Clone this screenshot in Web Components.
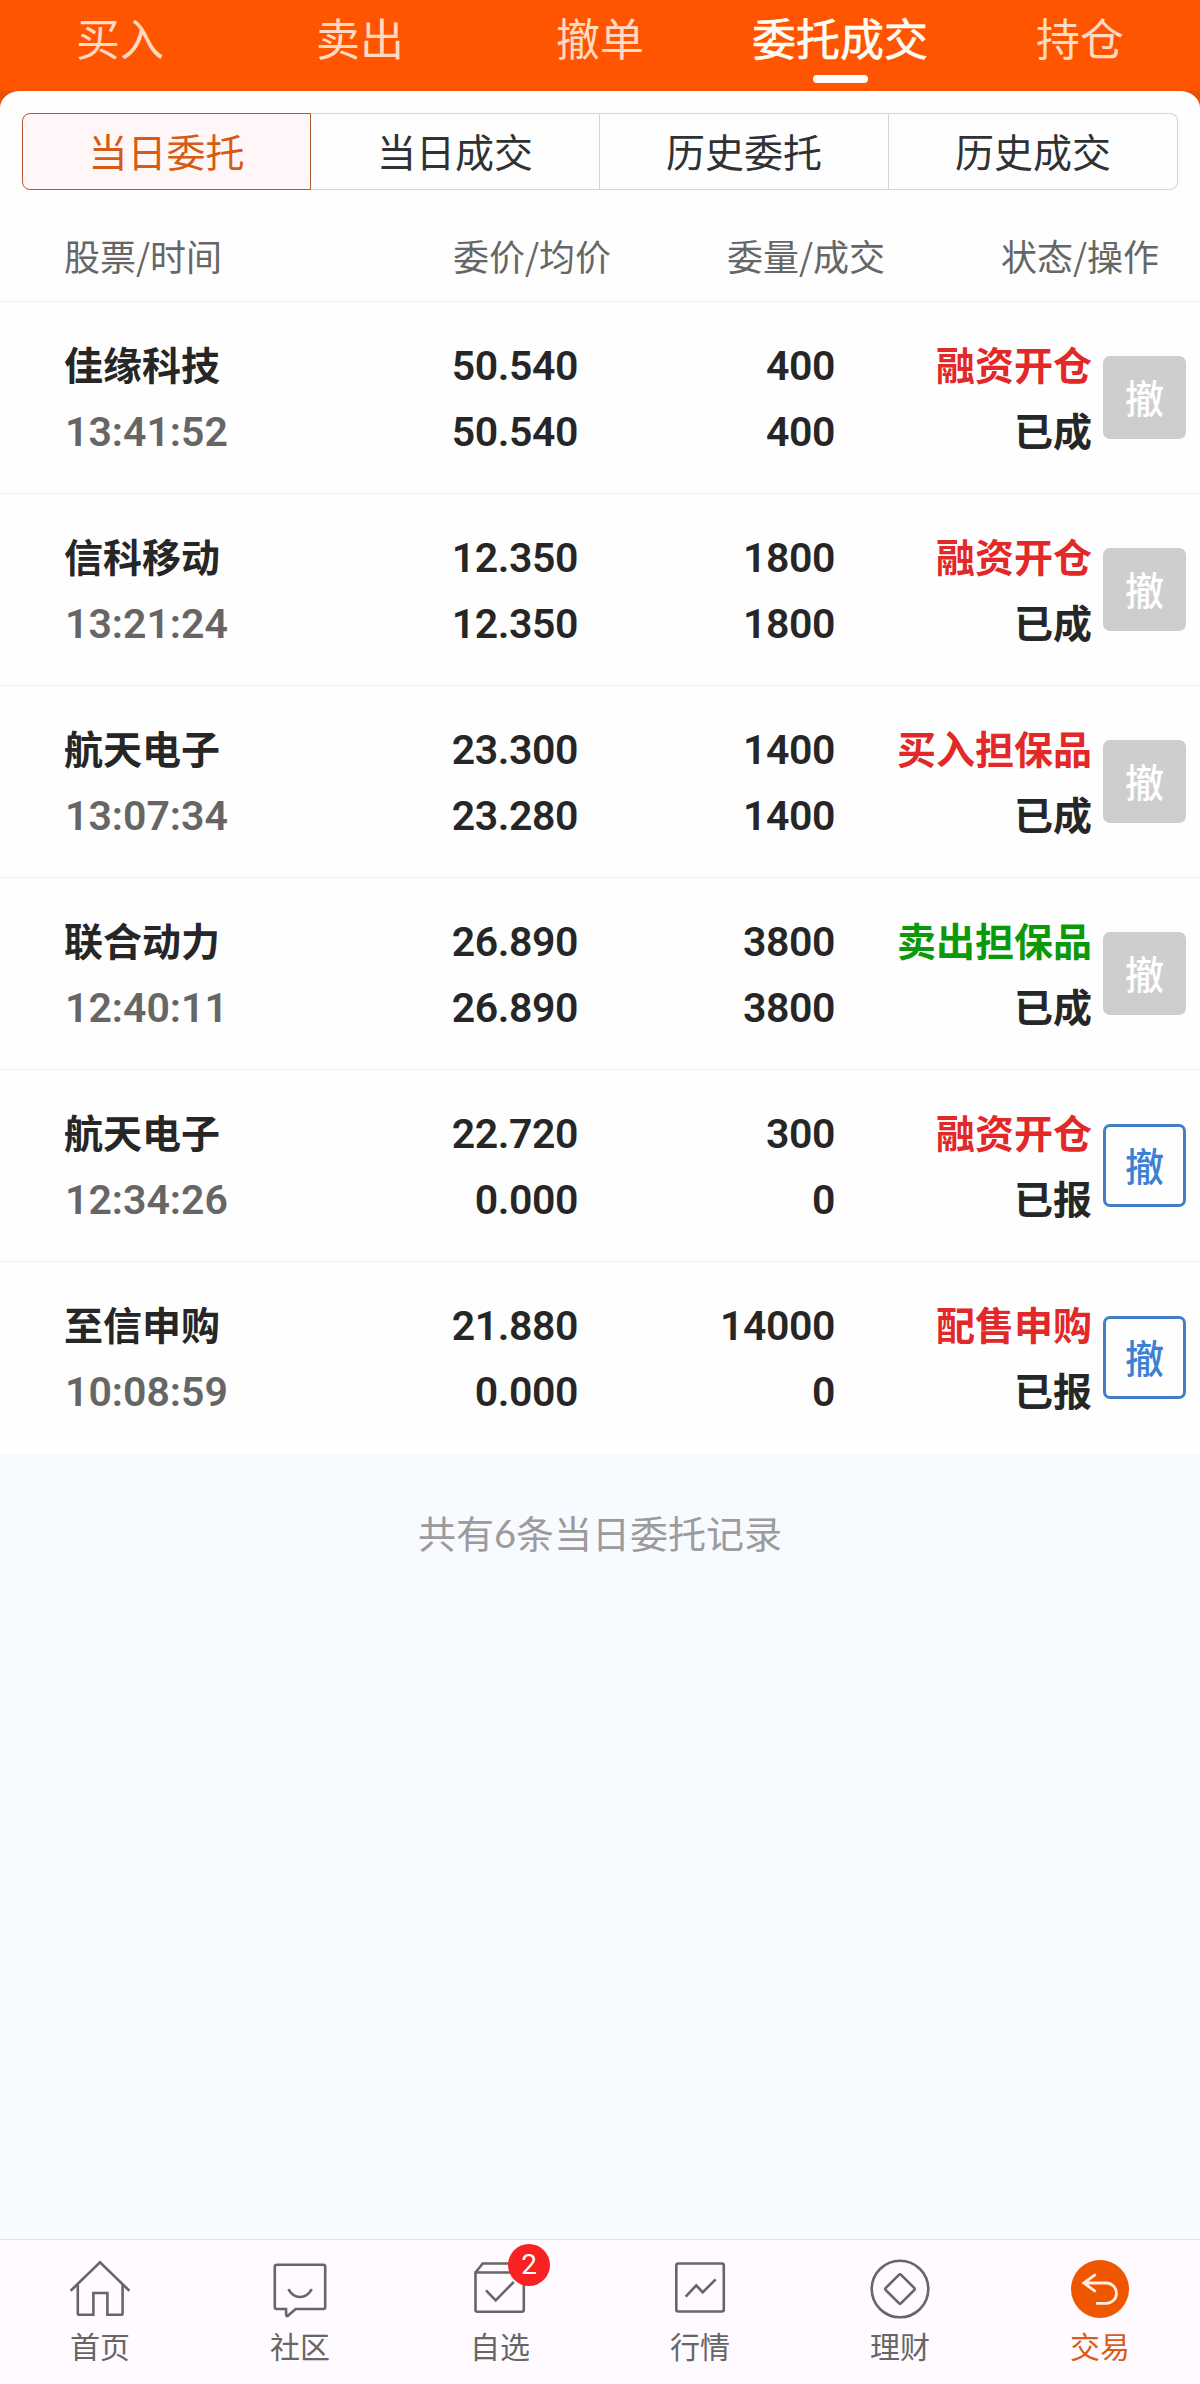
<!DOCTYPE html>
<html lang="zh-CN">
<head>
<meta charset="UTF-8">
<title>委托成交</title>
<style>
    html, body {
        margin: 0;
        height: 100%;
    }

    body {
        font-family: "Noto Sans CJK SC", sans-serif;
        color: #262626;
        background: #f7faff;
    }
</style>
</head>
<body>
<trade-page></trade-page>

<script>
    /**
     * Base class: renders the markup of the subclass into an open shadow root
     */
    class BaseElement extends HTMLElement {
        connectedCallback() {
            if (this.shadowRoot) return;
            this.attachShadow({ mode: 'open' });
            this.shadowRoot.innerHTML = this.render();
        }
    }

    /**
     * Orange bar at the top
     * <top-tab active>label</top-tab>
     */
    class TopTab extends BaseElement {
        render() {
            return `
                <style>
                    :host {
                        display: flex;
                        flex-direction: column;
                        align-items: center;
                        flex: 1 0 0;
                        height: 91px;
                        color: #ffdac2;
                        font-size: 44px;
                        line-height: 60px;
                        white-space: nowrap;
                    }
                    :host([active]) {
                        color: #fffdf8;
                        -webkit-text-stroke: 0.6px #fffdf8;
                    }
                    .label { padding-top: 7px; }
                    .bar {
                        width: 55px;
                        height: 8px;
                        margin-top: 8px;
                        border-radius: 4px;
                    }
                    :host([active]) .bar { background: #fffdfa; }
                </style>
                <div class="label"><slot></slot></div>
                <div class="bar"></div>
            `;
        }
    }

    /**
     * One button of the segmented control
     */
    class SegmentItem extends BaseElement {
        render() {
            return `
                <style>
                    :host {
                        display: block;
                        box-sizing: border-box;
                        width: 25%;
                        height: 77px;
                        border: 1px solid #d2d4d8;
                        border-left-width: 0;
                        font-size: 39px;
                        line-height: 72px;
                        text-align: center;
                        color: #303133;
                    }
                    :host(:last-child) { border-radius: 0 8px 8px 0; }
                    :host([active]) {
                        border: 1px solid #b35c30;
                        border-radius: 8px 0 0 8px;
                        background: #fff7f7;
                        color: #d65c14;
                    }
                </style>
                <slot></slot>
            `;
        }
    }

    /**
     * Column titles of the order list
     */
    class ListHead extends BaseElement {
        render() {
            return `
                <style>
                    :host {
                        display: grid;
                        grid-template-columns: 222px 389px 274px 274px;
                        height: 88px;
                        border-top: 1px solid #fafafa;
                        border-bottom: 1px solid #efefef;
                        font-size: 36px;
                        line-height: 85px;
                        text-align: right;
                        white-space: nowrap;
                        color: #666;
                    }
                </style>
                <span>股票/时间</span>
                <span>委价/均价</span>
                <span>委量/成交</span>
                <span>状态/操作</span>
            `;
        }
    }

    /**
     * Cancel button, grey when the order can't be cancelled any more
     */
    class CancelButton extends BaseElement {
        render() {
            return `
                <style>
                    :host {
                        box-sizing: border-box;
                        display: flex;
                        align-items: center;
                        justify-content: center;
                        width: 83px;
                        height: 83px;
                        padding-bottom: 4px;
                        border: 3px solid #427fc8;
                        border-radius: 7px;
                        color: #3c80d4;
                        font-size: 39px;
                        line-height: 60px;
                        font-weight: 500;
                    }
                    :host([disabled]) {
                        border-color: #cecece;
                        background: #cecece;
                        color: #fff;
                    }
                </style>
                <span><slot></slot></span>
            `;
        }
    }

    /**
     * One order
     * <order-row name time price avg amount filled type state side></order-row>
     */
    class OrderRow extends BaseElement {
        render() {
            const get = (name) => this.getAttribute(name);
            const disabled = get('state') === '已成' ? 'disabled' : '';
            return `
                <style>
                    :host {
                        box-sizing: border-box;
                        display: grid;
                        grid-template-columns: 300px 214px 257px 257px 83px;
                        align-items: center;
                        height: 192px;
                        padding-left: 64px;
                        border-bottom: 1px solid #efefef;
                        white-space: nowrap;
                    }
                    :host(:last-child) { border-bottom-color: #fff; }
                    .col {
                        display: flex;
                        flex-direction: column;
                        font-size: 39px;
                        font-weight: 700;
                        text-align: right;
                    }
                    .col span {
                        height: 66px;
                        line-height: 62px;
                    }
                    .first { text-align: left; }
                    .col .num {
                        font-family: Roboto, sans-serif;
                        font-size: 41px;
                        font-weight: 600;
                        letter-spacing: -0.4px;
                        line-height: 68px;
                    }
                    .col .time {
                        padding-left: 1px;
                        letter-spacing: 0;
                        color: #666;
                    }
                    .buy { color: #e22828; }
                    .sell { color: #0a990a; }
                    cancel-button { margin-left: 11px; }
                </style>
                <div class="col first">
                    <span>${get('name')}</span>
                    <span class="num time">${get('time')}</span>
                </div>
                <div class="col">
                    <span class="num">${get('price')}</span>
                    <span class="num">${get('avg')}</span>
                </div>
                <div class="col">
                    <span class="num">${get('amount')}</span>
                    <span class="num">${get('filled')}</span>
                </div>
                <div class="col">
                    <span class="${get('side')}">${get('type')}</span>
                    <span>${get('state')}</span>
                </div>
                <cancel-button ${disabled}>撤</cancel-button>
            `;
        }
    }

    // Icons of the bottom bar, drawn on a 64x64 grid
    const icons = {
        home: `
            <path d="M2.7 33.7L32 5.3l29.3 28.4"/>
            <path d="M9.8 28v28.7q0 1 1 1h14.6V36h14v21.7h14.2q1 0 1-1V28"/>`,
        community: `
            <path d="M9 7.7h46.2q2 0 2 2V50q0 2-2 2H27.7l-7.6 6.6q-1.8 1.4-1.9-.9l-.2-5.7H8.8q-2 0-2-2V9.7q0-2 2.2-2z"/>
            <path d="M20.4 32.2c5.5 10.4 17.8 10.4 23.3 0"/>`,
        favorite: `
            <path d="M7.5 15.5v37.2q0 2 2 2h44.3q2 0 2-2V15.5zL14.7 6.5H49l6.8 9"/>
            <path d="M18 33.3l9.700 10L45.700 25"/>`,
        market: `
            <rect x="8.3" y="6.5" width="47.5" height="48" rx="2"/>
            <path d="M17.7 39.7l10.6-11.4 6.4 7 13-13"/>`,
        finance: `
            <circle cx="32" cy="32" r="28.3"/>
            <path d="M30.9 17.8q1.1-1.1 2.2 0l13.1 13.1q1.1 1.1 0 2.2L33.1 46.2q-1.1 1.1-2.2 0L17.8 33.1q-1.1-1.1 0-2.2z"/>`,
        trade: `
            <circle cx="32" cy="32" r="29" fill="#ef5600" stroke="none"/>
            <path stroke="#ffeede" stroke-width="2.8" d="M28 46.3h10.3a10.15 10.15 0 0 0 0-20.3H16M27.7 17.3L15.8 26l11.9 8.7"/>`
    };

    /**
     * Item of the bottom bar
     * <nav-item icon="home" badge="2" active>label</nav-item>
     */
    class NavItem extends BaseElement {
        render() {
            const badge = this.getAttribute('badge');
            return `
                <style>
                    :host {
                        display: flex;
                        flex-direction: column;
                        align-items: center;
                        flex: 1 0 0;
                        padding-top: 17px;
                        color: #666;
                        font-size: 30px;
                        line-height: 40px;
                    }
                    :host([active]) { color: #dc5a14; }
                    .icon {
                        position: relative;
                        width: 64px;
                        height: 64px;
                        margin-bottom: 4px;
                    }
                    svg {
                        display: block;
                        fill: none;
                        stroke: #666;
                        stroke-width: 2.6;
                    }
                    .badge {
                        position: absolute;
                        left: 40px;
                        top: -13px;
                        width: 42px;
                        height: 42px;
                        border-radius: 50%;
                        background: #f92222;
                        color: #fff;
                        font: 400 28px/41px Roboto, sans-serif;
                        text-align: center;
                    }
                </style>
                <div class="icon">
                    <svg width="64" height="64" viewBox="0 0 64 64">${icons[this.getAttribute('icon')]}</svg>
                    ${badge ? `<span class="badge">${badge}</span>` : ''}
                </div>
                <span><slot></slot></span>
            `;
        }
    }

    /**
     * The whole page
     */
    class TradePage extends BaseElement {
        render() {
            return `
                <style>
                    :host {
                        display: flex;
                        flex-direction: column;
                        width: 1200px;
                        height: 2384px;
                        overflow: hidden;
                    }
                    header {
                        display: flex;
                        background: #ff5500;
                    }
                    .back { background: #e35006; }
                    .panel {
                        background: #fefefe;
                        border-radius: 20px 20px 0 0 / 17px 17px 0 0;
                    }
                    .segment {
                        display: flex;
                        padding: 22px;
                    }
                    main {
                        flex: 1;
                        padding-top: 49px;
                        font-size: 38px;
                        line-height: 58px;
                        text-align: center;
                        color: #9c9a9b;
                    }
                    .count { font-family: Lato, sans-serif; }
                    nav {
                        display: flex;
                        height: 144px;
                        border-top: 1px solid #e2e2e6;
                        background: #fefaff;
                    }
                </style>
                <header>
                    <top-tab>买入</top-tab>
                    <top-tab>卖出</top-tab>
                    <top-tab>撤单</top-tab>
                    <top-tab active>委托成交</top-tab>
                    <top-tab>持仓</top-tab>
                </header>
                <div class="back">
                    <div class="panel">
                        <div class="segment">
                            <segment-item active>当日委托</segment-item>
                            <segment-item>当日成交</segment-item>
                            <segment-item>历史委托</segment-item>
                            <segment-item>历史成交</segment-item>
                        </div>
                        <list-head></list-head>
                        <div>
                            <order-row name="佳缘科技" time="13:41:52" price="50.540" avg="50.540" amount="400" filled="400" side="buy" type="融资开仓" state="已成"></order-row>
                            <order-row name="信科移动" time="13:21:24" price="12.350" avg="12.350" amount="1800" filled="1800" side="buy" type="融资开仓" state="已成"></order-row>
                            <order-row name="航天电子" time="13:07:34" price="23.300" avg="23.280" amount="1400" filled="1400" side="buy" type="买入担保品" state="已成"></order-row>
                            <order-row name="联合动力" time="12:40:11" price="26.890" avg="26.890" amount="3800" filled="3800" side="sell" type="卖出担保品" state="已成"></order-row>
                            <order-row name="航天电子" time="12:34:26" price="22.720" avg="0.000" amount="300" filled="0" side="buy" type="融资开仓" state="已报"></order-row>
                            <order-row name="至信申购" time="10:08:59" price="21.880" avg="0.000" amount="14000" filled="0" side="buy" type="配售申购" state="已报"></order-row>
                        </div>
                    </div>
                </div>
                <main>共有<span class="count">6</span>条当日委托记录</main>
                <nav>
                    <nav-item icon="home">首页</nav-item>
                    <nav-item icon="community">社区</nav-item>
                    <nav-item icon="favorite" badge="2">自选</nav-item>
                    <nav-item icon="market">行情</nav-item>
                    <nav-item icon="finance">理财</nav-item>
                    <nav-item icon="trade" active>交易</nav-item>
                </nav>
            `;
        }
    }

    customElements.define('top-tab', TopTab);
    customElements.define('segment-item', SegmentItem);
    customElements.define('list-head', ListHead);
    customElements.define('cancel-button', CancelButton);
    customElements.define('order-row', OrderRow);
    customElements.define('nav-item', NavItem);
    customElements.define('trade-page', TradePage);
</script>
</body>
</html>
